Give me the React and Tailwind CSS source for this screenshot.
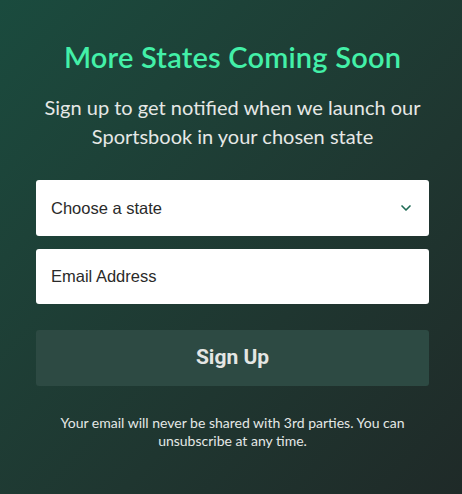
import { ChevronDown } from "lucide-react";

export default function App() {
  return (
    <div className="w-[462px] h-[494px] bg-gradient-to-br from-[#1a4b3e] to-[#1f2a28] pt-[38px] pl-[36px] font-['Lato',sans-serif]">
      <div className="w-[393px] flex flex-col items-center">
        <h1 className="text-[29px] leading-[38px] font-semibold text-[#43f0a8] tracking-[0.2px]">
          More States Coming Soon
        </h1>
        <p className="mt-[17px] text-[20px] leading-[29px] text-[#e6e8e6] text-center whitespace-nowrap">
          Sign up to get notified when we launch our
          <br />
          Sportsbook in your chosen state
        </p>

        <div className="mt-[29px] w-full flex flex-col gap-[13px] font-['Liberation_Sans',sans-serif]">
          <div className="h-[56px] bg-white rounded-[3px] flex items-center justify-between px-[15px] text-[16.5px] text-[#2a2a2a]">
            <span>Choose a state</span>
            <ChevronDown className="w-[16px] h-[16px] text-[#1f6b55]" strokeWidth={2.5} />
          </div>
          <div className="h-[55px] bg-white rounded-[3px] flex items-center px-[15px] text-[16.5px] text-[#2a2a2a]">
            Email Address
          </div>
        </div>

        <button className="mt-[26px] w-full h-[56px] rounded-[3px] bg-[#2d4a43] text-[#e4e6e3] text-[21px] font-bold font-['Roboto',sans-serif]">
          Sign Up
        </button>

        <p className="mt-[28px] text-[14px] leading-[18px] text-[#e4e8e6] text-center whitespace-nowrap">
          Your email will never be shared with 3rd parties. You can
          <br />
          unsubscribe at any time.
        </p>
      </div>
    </div>
  );
}
